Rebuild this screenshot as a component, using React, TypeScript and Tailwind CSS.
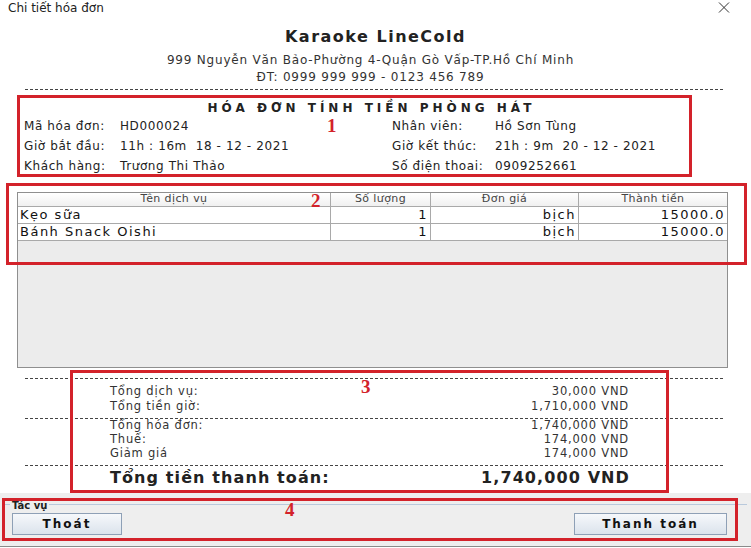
import React from "react";

const dash = "h-px w-[698px] ml-[25px] bg-[repeating-linear-gradient(90deg,#444_0_3px,transparent_3px_5px)]";

function InfoRow({ l1, v1, l2, v2 }: { l1: string; v1: string; l2: string; v2: string }) {
  return (
    <div className="grid grid-cols-[96px_272px_103px_1fr] pl-[24px] h-[20px] items-center text-[12px] tracking-[0.6px] text-[#222] whitespace-pre">
      <span>{l1}</span>
      <span>{v1}</span>
      <span>{l2}</span>
      <span>{v2}</span>
    </div>
  );
}

function SumRow({ l, v, h }: { l: string; v: string; h: string }) {
  return (
    <div className={"flex justify-between items-center ml-[110px] w-[519px] text-[11.5px] tracking-[0.8px] text-[#333] " + h}>
      <span>{l}</span>
      <span>{v}</span>
    </div>
  );
}

function Cell({ children, w, right, last }: { children?: React.ReactNode; w: string; right?: boolean; last?: boolean }) {
  return (
    <div
      className={
        w +
        " h-full flex items-center px-[2px] " +
        (right ? "justify-end " : "justify-start ") +
        (last ? "" : "border-r border-[#a9a9a9]")
      }
    >
      {children}
    </div>
  );
}

export default function App() {
  const rows = [
    { n: "Kẹo sữa", q: "1", u: "bịch", t: "15000.0" },
    { n: "Bánh Snack Oishi", q: "1", u: "bịch", t: "15000.0" },
  ];
  return (
    <div className="relative w-[751px] h-[548px] overflow-hidden bg-white font-['DejaVu_Sans',sans-serif] text-[#222]">
      {/* title bar */}
      <div className="flex items-center justify-between h-[16px] pl-[8px] pr-[21px]">
        <span className="text-[12px] leading-[16px] text-[#222]">Chi tiết hóa đơn</span>
        <svg width="12" height="11" viewBox="0 0 12 11" className="mt-[-1px]">
          <path d="M1 0.5 L11 10.5 M11 0.5 L1 10.5" stroke="#333" strokeWidth="1" />
        </svg>
      </div>

      {/* shop header */}
      <div className="mt-[12px] h-[18px] text-center text-[16px] leading-[18px] font-bold tracking-[1.5px] text-[#222]">
        Karaoke LineCold
      </div>
      <div className="mt-[6px] pr-[10px] h-[17px] text-center text-[12px] leading-[17px] tracking-[0.8px] text-[#333]">
        999 Nguyễn Văn Bảo-Phường 4-Quận Gò Vấp-TP.Hồ Chí Minh
      </div>
      <div className="pr-[10px] h-[17px] text-center text-[12px] leading-[17px] tracking-[0.8px] text-[#333]">
        ĐT: 0999 999 999 - 0123 456 789
      </div>
      <div className={"mt-[3px] " + dash} />

      {/* invoice info */}
      <div className="mt-[11px] pr-[8px] h-[14px] text-center text-[12px] leading-[14px] font-bold tracking-[4px] text-[#222]">
        HÓA ĐƠN TÍNH TIỀN PHÒNG HÁT
      </div>
      <div className="mt-[1px]">
        <InfoRow l1="Mã hóa đơn:" v1="HD000024" l2="Nhân viên:" v2="Hồ Sơn Tùng" />
        <InfoRow l1="Giờ bắt đầu:" v1="11h : 16m  18 - 12 - 2021" l2="Giờ kết thúc:" v2="21h : 9m  20 - 12 - 2021" />
        <InfoRow l1="Khách hàng:" v1="Trương Thi Thảo" l2="Số điện thoai:" v2="0909252661" />
      </div>
      <div className={"mt-[7px] " + dash} />

      {/* table */}
      <div className="mt-[8px] ml-[17px] w-[711px] h-[176px] border border-[#8f8f8f] bg-[#ececec] flex flex-col">
        <div className="flex h-[14px] border-b border-[#a9a9a9] bg-[linear-gradient(#ffffff,#f0f0f0)] text-[11px] tracking-[0.4px] text-[#444]">
          <div className="w-[313px] h-full flex items-center justify-center border-r border-[#a9a9a9]">Tên dịch vụ</div>
          <div className="w-[100px] h-full flex items-center justify-center border-r border-[#a9a9a9]">Số lượng</div>
          <div className="w-[148px] h-full flex items-center justify-center border-r border-[#a9a9a9]">Đơn giá</div>
          <div className="flex-1 h-full flex items-center justify-center">Thành tiền</div>
        </div>
        {rows.map((r) => (
          <div key={r.n} className="flex h-[17px] bg-white border-b border-[#a9a9a9] text-[13px] tracking-[1.5px] text-[#111]">
            <Cell w="w-[313px]">{r.n}</Cell>
            <Cell w="w-[100px]" right>{r.q}</Cell>
            <Cell w="w-[148px]" right>{r.u}</Cell>
            <Cell w="flex-1" right last>{r.t}</Cell>
          </div>
        ))}
      </div>

      {/* summary */}
      <div className={"mt-[10px] " + dash} />
      <div className="mt-[5px]">
        <SumRow l="Tổng dịch vụ:" v="30,000 VND" h="h-[15px]" />
        <SumRow l="Tổng tiền giờ:" v="1,710,000 VND" h="h-[15px]" />
      </div>
      <div className={"mt-[4px] " + dash} />
      <div>
        <SumRow l="Tổng hóa đơn:" v="1,740,000 VND" h="h-[14px]" />
        <SumRow l="Thuế:" v="174,000 VND" h="h-[14px]" />
        <SumRow l="Giảm giá" v="174,000 VND" h="h-[14px]" />
      </div>
      <div className={"mt-[4px] " + dash} />
      <div className="flex justify-between items-center ml-[110px] w-[520px] h-[24px] text-[16px] font-bold tracking-[1.1px] text-[#222]">
        <span>Tổng tiền thanh toán:</span>
        <span>1,740,000 VND</span>
      </div>

      {/* actions panel */}
      <div className="mt-[3px] h-[54px] bg-[#eeeeee] border-b border-[#8a8a8a] flex flex-col">
        <div className="mt-[8px] flex items-start px-[4px] h-[10px]">
          <div className="mt-[3px] w-[6px] border-t border-[#b9c9dc]" />
          <span className="px-[2px] text-[10px] leading-[10px] font-bold text-[#222]">Tác vụ</span>
          <div className="mt-[3px] flex-1 border-t border-[#b9c9dc]" />
        </div>
        <div className="mt-[2px] flex justify-between pl-[12px] pr-[24px]">
          <button className="w-[110px] h-[22px] border border-[#8ea0b6] bg-[linear-gradient(#f6f8fb,#dbe3ec)] text-[12px] font-bold tracking-[2px] text-[#111]">
            Thoát
          </button>
          <button className="w-[153px] h-[22px] border border-[#8ea0b6] bg-[linear-gradient(#f6f8fb,#dbe3ec)] text-[12px] font-bold tracking-[2px] text-[#111]">
            Thanh toán
          </button>
        </div>
      </div>

      {/* red annotation boxes */}
      <div className="absolute left-[17px] top-[95px] w-[675px] h-[82px] border-[3px] border-[#d3222a]" />
      <div className="absolute left-[6px] top-[183px] w-[741px] h-[82px] border-[3px] border-[#d3222a]" />
      <div className="absolute left-[70px] top-[370px] w-[599px] h-[123px] border-[3px] border-[#d3222a]" />
      <div className="absolute left-[2px] top-[498px] w-[736px] h-[43px] border-[3px] border-[#d3222a]" />
      <span className="absolute left-[327px] top-[116px] text-[19px] leading-[20px] font-bold text-[#d3222a] font-['Liberation_Serif',serif]">1</span>
      <span className="absolute left-[311px] top-[191px] text-[19px] leading-[20px] font-bold text-[#d3222a] font-['Liberation_Serif',serif]">2</span>
      <span className="absolute left-[361px] top-[377px] text-[19px] leading-[20px] font-bold text-[#d3222a] font-['Liberation_Serif',serif]">3</span>
      <span className="absolute left-[285px] top-[500px] text-[19px] leading-[20px] font-bold text-[#d3222a] font-['Liberation_Serif',serif]">4</span>
    </div>
  );
}
